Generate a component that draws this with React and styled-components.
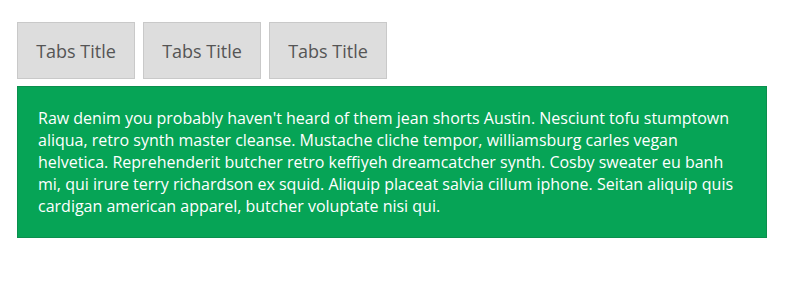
import React from "react";
import styled, { createGlobalStyle } from "styled-components";

const GlobalStyle = createGlobalStyle`
  body {
    margin: 0;
    background: #ffffff;
    font-family: "Open Sans", "Liberation Sans", sans-serif;
  }
`;

const Wrapper = styled.div`
  padding: 22px 20px 0 17px;
`;

const TabList = styled.div`
  display: flex;
  gap: 8px;
  margin-bottom: 7px;
`;

const Tab = styled.button`
  box-sizing: border-box;
  width: 118px;
  height: 57px;
  padding: 0;
  background: #dddddd;
  border: 1px solid #c9c9c9;
  color: #555555;
  font-family: "Open Sans", "Liberation Sans", sans-serif;
  font-size: 18px;
  cursor: pointer;
`;

const Panel = styled.div`
  box-sizing: border-box;
  width: 750px;
  background: #06a456;
  border: 1px solid #0b8f4e;
  padding: 20px;
  color: #ffffff;
  font-size: 16px;
  line-height: 22px;
`;

const tabs = ["Tabs Title", "Tabs Title", "Tabs Title"];

const App = () => {
  return (
    <>
      <GlobalStyle />
      <Wrapper>
        <TabList>
          {tabs.map((t, i) => (
            <Tab key={i}>{t}</Tab>
          ))}
        </TabList>
        <Panel>
          Raw denim you probably haven't heard of them jean shorts Austin. Nesciunt tofu stumptown
          aliqua, retro synth master cleanse. Mustache cliche tempor, williamsburg carles vegan
          helvetica. Reprehenderit butcher retro keffiyeh dreamcatcher synth. Cosby sweater eu banh
          mi, qui irure terry richardson ex squid. Aliquip placeat salvia cillum iphone. Seitan
          aliquip quis cardigan american apparel, butcher voluptate nisi qui.
        </Panel>
      </Wrapper>
    </>
  );
};

export default App;
